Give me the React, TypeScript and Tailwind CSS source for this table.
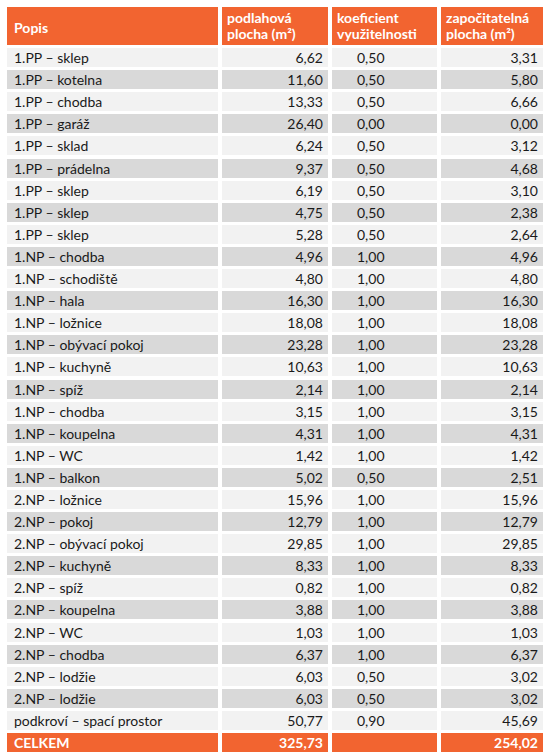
import React from "react";

const rows: [string, string, string, string][] = [
  ["1.PP – sklep", "6,62", "0,50", "3,31"],
  ["1.PP – kotelna", "11,60", "0,50", "5,80"],
  ["1.PP – chodba", "13,33", "0,50", "6,66"],
  ["1.PP – garáž", "26,40", "0,00", "0,00"],
  ["1.PP – sklad", "6,24", "0,50", "3,12"],
  ["1.PP – prádelna", "9,37", "0,50", "4,68"],
  ["1.PP – sklep", "6,19", "0,50", "3,10"],
  ["1.PP – sklep", "4,75", "0,50", "2,38"],
  ["1.PP – sklep", "5,28", "0,50", "2,64"],
  ["1.NP – chodba", "4,96", "1,00", "4,96"],
  ["1.NP – schodiště", "4,80", "1,00", "4,80"],
  ["1.NP – hala", "16,30", "1,00", "16,30"],
  ["1.NP – ložnice", "18,08", "1,00", "18,08"],
  ["1.NP – obývací pokoj", "23,28", "1,00", "23,28"],
  ["1.NP – kuchyně", "10,63", "1,00", "10,63"],
  ["1.NP – spíž", "2,14", "1,00", "2,14"],
  ["1.NP – chodba", "3,15", "1,00", "3,15"],
  ["1.NP – koupelna", "4,31", "1,00", "4,31"],
  ["1.NP – WC", "1,42", "1,00", "1,42"],
  ["1.NP – balkon", "5,02", "0,50", "2,51"],
  ["2.NP – ložnice", "15,96", "1,00", "15,96"],
  ["2.NP – pokoj", "12,79", "1,00", "12,79"],
  ["2.NP – obývací pokoj", "29,85", "1,00", "29,85"],
  ["2.NP – kuchyně", "8,33", "1,00", "8,33"],
  ["2.NP – spíž", "0,82", "1,00", "0,82"],
  ["2.NP – koupelna", "3,88", "1,00", "3,88"],
  ["2.NP – WC", "1,03", "1,00", "1,03"],
  ["2.NP – chodba", "6,37", "1,00", "6,37"],
  ["2.NP – lodžie", "6,03", "0,50", "3,02"],
  ["2.NP – lodžie", "6,03", "0,50", "3,02"],
  ["podkroví – spací prostor", "50,77", "0,90", "45,69"],
];

export default function App() {
  return (
    <div
      className="w-[550px] h-[756px] bg-white pl-[7px] pt-[7px] text-[14px] text-[#1a1a1a] overflow-hidden"
      style={{ fontFamily: "Lato, 'Open Sans', sans-serif" }}
    >
      <div className="grid grid-cols-[211px_106px_105px_102px] gap-x-[4px] gap-y-[3.1px] grid-rows-[38px] auto-rows-[19px]">
        <div className="bg-[#f26430] text-white font-bold flex items-center px-[7px] pt-[2px]">
          Popis
        </div>
        <div className="bg-[#f26430] text-white font-bold px-[5px] pt-[3px] leading-[16px]">
          podlahová
          <br />
          plocha (m²)
        </div>
        <div className="bg-[#f26430] text-white font-bold px-[5px] pt-[3px] leading-[16px]">
          koeficient
          <br />
          využitelnosti
        </div>
        <div className="bg-[#f26430] text-white font-bold px-[5px] pt-[3px] leading-[16px]">
          započitatelná
          <br />
          plocha (m²)
        </div>
        {rows.map((r, i) => {
          const bg = i % 2 === 0 ? "bg-[#f2f2f2]" : "bg-[#d9d9d9]";
          return (
            <React.Fragment key={i}>
              <div className={`${bg} px-[7px] flex items-center whitespace-nowrap`}>{r[0]}</div>
              <div className={`${bg} px-[5px] flex items-center justify-end`}>{r[1]}</div>
              <div className={`${bg} pl-[25px] flex items-center`}>{r[2]}</div>
              <div className={`${bg} px-[5px] flex items-center justify-end`}>{r[3]}</div>
            </React.Fragment>
          );
        })}
        <div className="bg-[#f26430] text-white font-bold px-[7px] flex items-center">CELKEM</div>
        <div className="bg-[#f26430] text-white font-bold px-[5px] flex items-center justify-end">325,73</div>
        <div className="bg-[#f26430]" />
        <div className="bg-[#f26430] text-white font-bold px-[5px] flex items-center justify-end">254,02</div>
      </div>
    </div>
  );
}
